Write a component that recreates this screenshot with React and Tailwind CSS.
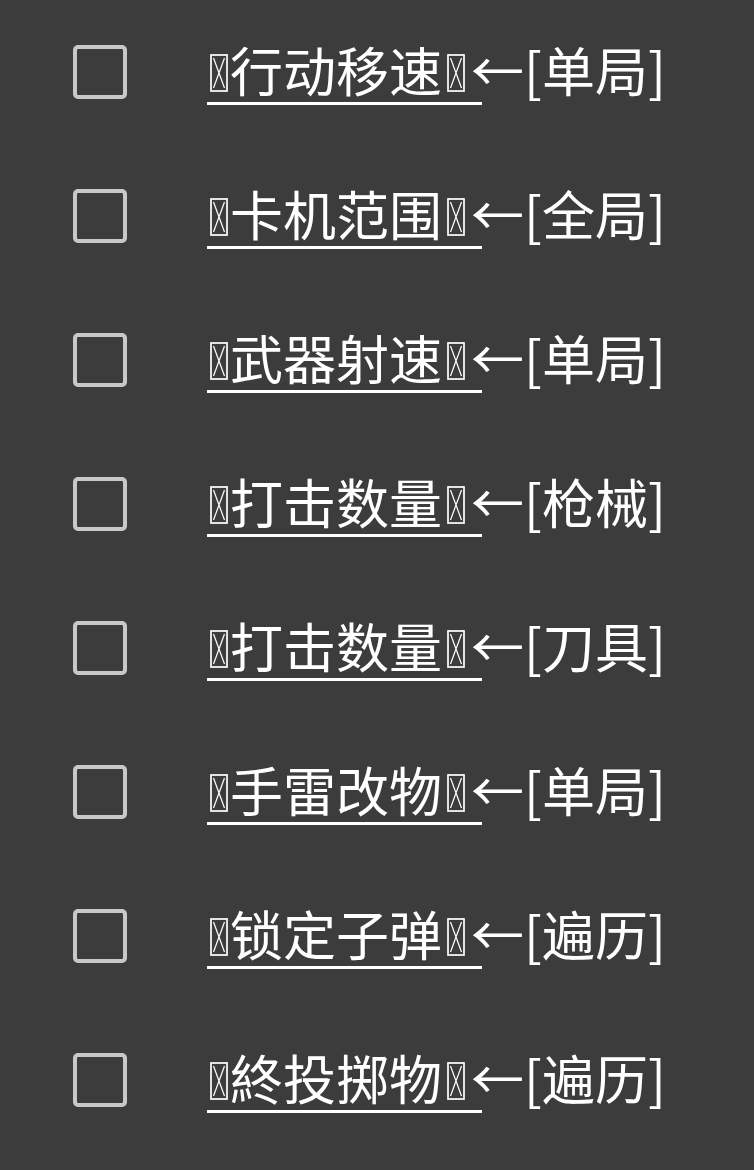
import React from 'react';

const rows = [
  { name: '行动移速', tag: '单局' },
  { name: '卡机范围', tag: '全局' },
  { name: '武器射速', tag: '单局' },
  { name: '打击数量', tag: '枪械' },
  { name: '打击数量', tag: '刀具' },
  { name: '手雷改物', tag: '单局' },
  { name: '锁定子弹', tag: '遍历' },
  { name: '終投掷物', tag: '遍历' },
];

// missing-glyph box, as the device draws it
const Tofu = ({ className }) => (
  <svg width="18" height="38" viewBox="0 0 18 38" className={`${className} shrink-0`}>
    <rect x="1" y="1" width="16" height="36" fill="none" stroke="white" strokeWidth="1.7" />
    <path d="M3.5 4 L14.5 34 M14.5 4 L3.5 34" stroke="white" strokeWidth="1.2" />
  </svg>
);

const App = () => {
  return (
    <div
      className="w-[754px] h-[1170px] bg-[#3c3c3c] text-white"
      style={{ fontFamily: '"Noto Sans CJK SC", "Noto Sans", sans-serif' }}
    >
      {rows.map((row, i) => (
        <div key={i} className="flex items-center h-[144px]">
          <div className="ml-[73px] w-[54px] h-[54px] border-[4px] border-[#c8c8c8] rounded-[5px] shrink-0" />
          <div className="ml-[80px] pt-[4px] flex items-baseline text-[53px] leading-none whitespace-nowrap font-normal">
            <div className="flex items-baseline border-b-[3px] border-white pb-[6px] pr-[11px]">
              <Tofu className="ml-[3px] mr-[2px]" />
              <span>{row.name}</span>
              <Tofu className="ml-[5px] mr-[6px]" />
            </div>
            <span className="-ml-[11px]">←[{row.tag}]</span>
          </div>
        </div>
      ))}
    </div>
  );
};

export default App;
